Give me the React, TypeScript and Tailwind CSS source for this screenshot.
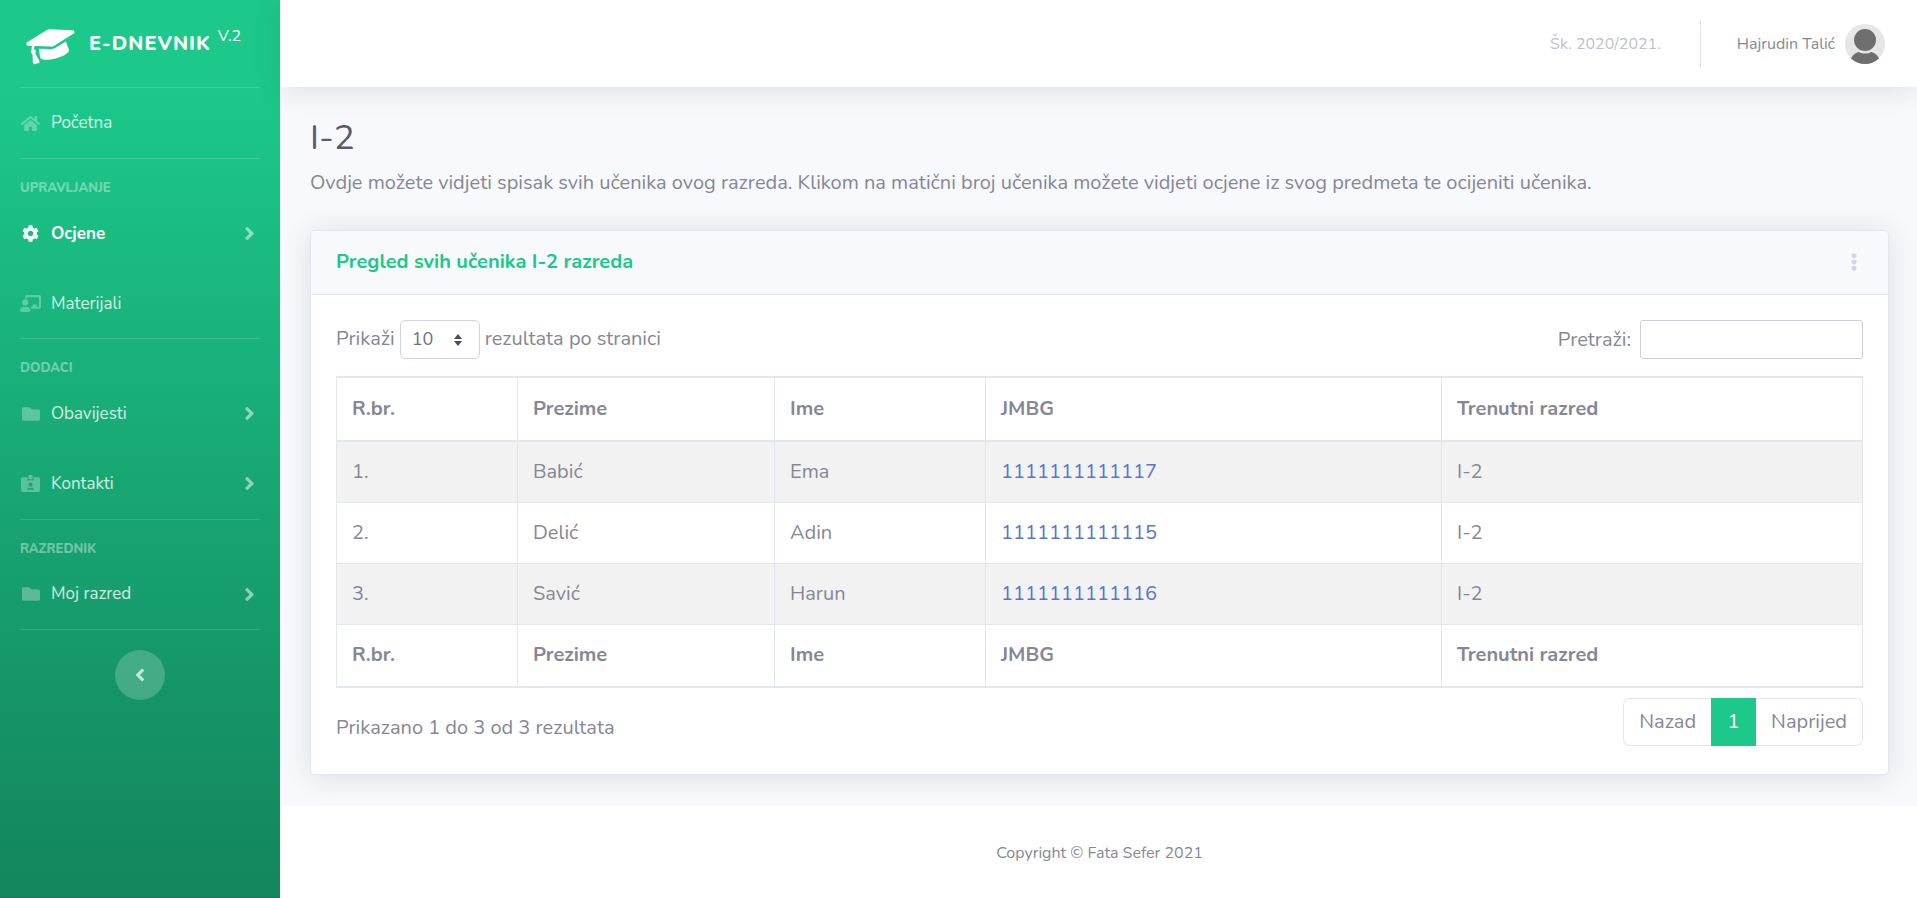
import React from "react";
import {
  FaAngleLeft,
  FaAngleRight,
  FaChalkboardTeacher,
  FaCog,
  FaEllipsisV,
  FaFolder,
  FaGraduationCap,
  FaHome,
  FaIdCardAlt,
} from "react-icons/fa";

const students = [
  { rb: "1.", prezime: "Babić", ime: "Ema", jmbg: "1111111111117", razred: "I-2" },
  { rb: "2.", prezime: "Delić", ime: "Adin", jmbg: "1111111111115", razred: "I-2" },
  { rb: "3.", prezime: "Savić", ime: "Harun", jmbg: "1111111111116", razred: "I-2" },
];

const columns = ["R.br.", "Prezime", "Ime", "JMBG", "Trenutni razred"];

const Divider = () => <hr className="mx-5 border-0 border-t border-white/15" />;

const Heading: React.FC<{ label: string }> = ({ label }) => (
  <div className="mx-5 h-[39.4px] pt-[19px] text-[13px] leading-[20px] font-extrabold text-white/40">{label}</div>
);

const NavItem: React.FC<{
  icon: React.ReactNode;
  label: string;
  arrow?: boolean;
  active?: boolean;
}> = ({ icon, label, arrow, active }) => (
  <div className={`flex h-[70px] items-center pl-5 pr-[20px] ${active ? "text-white font-bold" : "text-white/80"}`}>
    <span className={`mr-[10px] flex w-[21px] justify-center ${active ? "text-white" : "text-white/30"}`}>{icon}</span>
    <span className="flex-1 text-[17px]">{label}</span>
    {arrow && <FaAngleRight className="text-[21px] text-white/50" />}
  </div>
);

const Sidebar = () => (
  <aside className="flex w-[280px] shrink-0 flex-col bg-gradient-to-b from-[#1cc88a] from-10% to-[#13855c]">
    <div className="flex h-[87px] items-center pl-[27px]">
      <FaGraduationCap className="-rotate-15 text-[50px] text-white" />
      <span className="ml-[12px] text-[20px] font-extrabold tracking-[0.05em] text-white">E-DNEVNIK</span>
      <span className="mb-[15px] ml-[7px] text-[16px] text-white">V.2</span>
    </div>
    <Divider />
    <NavItem icon={<FaHome className="text-[19px]" />} label="Početna" />
    <Divider />
    <Heading label="UPRAVLJANJE" />
    <NavItem icon={<FaCog className="text-[17px]" />} label="Ocjene" arrow active />
    <NavItem icon={<FaChalkboardTeacher className="text-[21px]" />} label="Materijali" />
    <Divider />
    <Heading label="DODACI" />
    <NavItem icon={<FaFolder className="text-[18px]" />} label="Obavijesti" arrow />
    <NavItem icon={<FaIdCardAlt className="text-[19px]" />} label="Kontakti" arrow />
    <Divider />
    <Heading label="RAZREDNIK" />
    <NavItem icon={<FaFolder className="text-[18px]" />} label="Moj razred" arrow />
    <Divider />
    <div className="flex justify-center pt-[20px]">
      <div className="flex h-[50px] w-[50px] items-center justify-center rounded-full bg-white/20 text-[20px] text-white/70">
        <FaAngleLeft />
      </div>
    </div>
  </aside>
);

const Avatar = () => (
  <svg width="40" height="40" viewBox="0 0 40 40" className="ml-[10px]">
    <defs>
      <clipPath id="avatar-clip">
        <circle cx="20" cy="20" r="20" />
      </clipPath>
    </defs>
    <g clipPath="url(#avatar-clip)">
      <rect width="40" height="40" fill="#e6e6e6" />
      <circle cx="20" cy="16" r="11" fill="#6e6e6e" />
      <path d="M5 40c0-7 4-11 9-12 3 2 9 2 12 0 5 1 9 5 9 12z" fill="#6e6e6e" />
    </g>
  </svg>
);

const Topbar = () => (
  <header className="relative z-10 flex h-[87px] items-center justify-end bg-white pr-[32px] shadow-[0_2px_28px_rgba(58,59,69,0.15)]">
    <span className="text-[16px] text-[#bfc0cb]">Šk. 2020/2021.</span>
    <div className="ml-[39px] mr-[36px] h-[48px] w-px bg-[#e3e6f0]" />
    <span className="text-[16px] text-[#858796]">Hajrudin Talić</span>
    <Avatar />
  </header>
);

const cellBorder = "border-r border-[#e3e6f0] px-[15px] align-middle last:border-r-0";

const StudentsTable = () => (
  <table className="w-full table-fixed border border-[#e3e6f0] border-collapse text-[20px] text-[#858796]">
    <colgroup>
      <col className="w-[181px]" />
      <col className="w-[257px]" />
      <col className="w-[211px]" />
      <col className="w-[456px]" />
      <col />
    </colgroup>
    <thead>
      <tr className="h-[64px] border-y-2 border-[#e3e6f0]">
        {columns.map((c) => (
          <th key={c} className={`${cellBorder} pb-[1px] text-left font-bold`}>{c}</th>
        ))}
      </tr>
    </thead>
    <tbody>
      {students.map((s, i) => (
        <tr key={s.rb} className={`h-[61px] border-b border-[#e3e6f0] ${i % 2 === 0 ? "bg-[#f2f2f2]" : "bg-white"}`}>
          <td className={cellBorder}>{s.rb}</td>
          <td className={cellBorder}>{s.prezime}</td>
          <td className={cellBorder}>{s.ime}</td>
          <td className={`${cellBorder} text-[#5a75cf]`}>{s.jmbg}</td>
          <td className={cellBorder}>{s.razred}</td>
        </tr>
      ))}
    </tbody>
    <tfoot>
      <tr className="h-[63px] border-b-2 border-[#e3e6f0]">
        {columns.map((c) => (
          <th key={c} className={`${cellBorder} text-left font-bold`}>{c}</th>
        ))}
      </tr>
    </tfoot>
  </table>
);

const Card = () => (
  <section className="rounded-[5px] border border-[#e3e6f0] bg-white shadow-[0_2px_28px_rgba(58,59,69,0.15)]">
    <div className="flex h-[64px] items-center justify-between rounded-t-[5px] border-b border-[#e3e6f0] bg-[#f8f9fc] pl-[25px] pr-[25px]">
      <h2 className="pb-[2px] text-[20px] font-bold text-[#1cc88a]">Pregled svih učenika I-2 razreda</h2>
      <FaEllipsisV className="mb-[1px] text-[18px] text-[#d1d3e2]" />
    </div>
    <div className="px-[25px] pb-[28px] pt-[25px] text-[20px] text-[#858796]">
      <div className="mb-[17px] flex items-center justify-between">
        <div className="flex items-center">
          <span className="pb-[2px]">Prikaži</span>
          <div className="mx-[5px] flex h-[39px] w-[80px] items-center justify-between rounded-[5px] border border-[#d1d3e2] pl-[11px] pr-[16px] text-[18px] text-[#6e707e]">
            10
            <svg width="10" height="14" viewBox="0 0 10 14" fill="#4b4d5c">
              <path d="M5 1l4 5H1zM5 13L1 8h8z" />
            </svg>
          </div>
          <span className="pb-[2px]">rezultata po stranici</span>
        </div>
        <div className="flex items-center">
          <span className="mr-[9px]">Pretraži:</span>
          <input className="h-[39px] w-[223px] rounded-[3px] border border-[#cfd0d6] bg-white" />
        </div>
      </div>
      <StudentsTable />
      <div className="mt-[10px] flex items-center justify-between">
        <span className="pt-[12px]">Prikazano 1 do 3 od 3 rezultata</span>
        <div className="flex h-[48px] items-stretch">
          <div className="flex items-center rounded-l-[7px] border border-r-0 border-[#e3e6f0] px-[15px]">Nazad</div>
          <div className="flex w-[45px] items-center justify-center bg-[#1cc88a] text-white">1</div>
          <div className="flex items-center rounded-r-[7px] border border-l-0 border-[#e3e6f0] px-[15px]">Naprijed</div>
        </div>
      </div>
    </div>
  </section>
);

export default function App() {
  return (
    <div className="flex min-h-[898px] font-['Nunito','Lato','Noto_Sans',sans-serif]">
      <Sidebar />
      <div className="flex min-w-0 flex-1 flex-col bg-[#f8f9fc]">
        <Topbar />
        <main className="flex-1 pl-[30px] pr-[28px] pt-[27px]">
          <h1 className="text-[35px] leading-[48px] text-[#5a5c69]">I-2</h1>
          <p className="mb-[32px] mt-[6px] text-[20px] leading-[30px] text-[#858796]">
            Ovdje možete vidjeti spisak svih učenika ovog razreda. Klikom na matični broj učenika možete vidjeti ocjene iz svog predmeta te ocijeniti učenika.
          </p>
          <Card />
        </main>
        <footer className="flex h-[92px] items-center justify-center bg-white pl-[2px] pt-[2px] text-[16px] text-[#858796]">
          Copyright © Fata Sefer 2021
        </footer>
      </div>
    </div>
  );
}
